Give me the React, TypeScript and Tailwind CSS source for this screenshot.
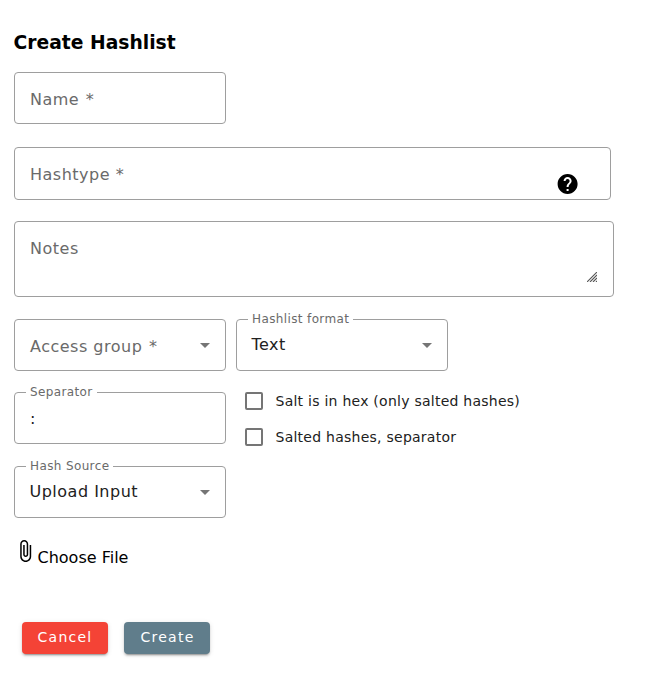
import React from "react";

type FieldProps = {
  size: string;
  label: string;
  required?: boolean;
  floating?: boolean;
  value?: string;
  valueClass?: string;
  select?: boolean;
  children?: React.ReactNode;
};

function Field({ size, label, required, floating, value, valueClass = "mt-[13px] -ml-[0.5px]", select, children }: FieldProps) {
  return (
    <div className={`relative flex rounded-[4px] border border-[#9e9e9e] pl-[15px] pr-[15px] ${size}`}>
      {floating ? (
        <>
          <span className="absolute left-[11px] top-[-9px] whitespace-nowrap bg-white px-1 text-[12px] leading-4 tracking-[0.375px] text-[#6a6a6a]">
            {label}
          </span>
          <span className={`text-[16px] leading-6 tracking-[0.5px] text-[#212121] ${valueClass}`}>{value}</span>
        </>
      ) : (
        <span className="mt-[15px] text-[16px] leading-6 tracking-[0.5px] text-[#6a6a6a]">
          {label}
          {required && <span className="ml-[1px]"> *</span>}
        </span>
      )}
      {select && (
        <svg className="ml-auto mt-[23px] h-[5px] w-[10px]" viewBox="0 0 10 5" fill="#757575">
          <path d="M0 0h10L5 5z" />
        </svg>
      )}
      {children}
    </div>
  );
}

function Checkbox({ label }: { label: string }) {
  return (
    <label className="flex h-9 items-center">
      <span className="h-[18px] w-[18px] rounded-[2px] border-2 border-[#757575]" />
      <span className="ml-[12.5px] text-[14px] leading-5 tracking-[0.25px] text-[#212121]">{label}</span>
    </label>
  );
}

const buttonBase =
  "h-8 w-[86px] rounded-[4px] text-[14px] leading-[30px] pb-[2px] tracking-[1.25px] text-white shadow-[0_3px_1px_-2px_rgba(0,0,0,0.2),0_2px_2px_0_rgba(0,0,0,0.14),0_1px_5px_0_rgba(0,0,0,0.12)]";

export default function App() {
  return (
    <main className="h-[678px] w-[668px] bg-white pl-[14px] pt-[31px] font-['DejaVu_Sans',sans-serif] text-black">
      <h3 className="-ml-[0.4px] h-[41px] text-[18.72px] font-bold leading-6">Create Hashlist</h3>

      <Field size="h-[52px] w-[212px]" label="Name" required />

      <Field size="mt-[23px] h-[53px] w-[597px]" label="Hashtype *">
        <svg className="ml-auto mr-[15px] mt-6 h-6 w-6" viewBox="0.4 0 24 24">
          <path d="M12 2C6.48 2 2 6.48 2 12s4.48 10 10 10 10-4.48 10-10S17.52 2 12 2zm1 17h-2v-2h2v2zm2.07-7.75l-.9.92C13.45 12.9 13 13.5 13 15h-2v-.5c0-1.1.45-2.1 1.17-2.83l1.24-1.26c.37-.36.59-.86.59-1.41 0-1.1-.9-2-2-2s-2 .9-2 2H8c0-2.21 1.79-4 4-4s4 1.79 4 4c0 .88-.36 1.68-.93 2.25z" />
        </svg>
      </Field>

      <Field size="mt-[21px] h-[76px] w-[600px]" label="Notes">
        <svg className="ml-auto mr-px mt-[50px] h-[10px] w-[10px]" viewBox="0 0 10 10" stroke="#555" strokeWidth="1.1">
          <path d="M0 10L10 0M3 10l7-7M6 10l4-4M9 10l1-1" />
        </svg>
      </Field>

      <div className="mt-[22px] flex gap-[10px]">
        <Field size="h-[52px] w-[212px]" label="Access group" required select />
        <Field size="h-[52px] w-[212px]" label="Hashlist format" value="Text" floating select />
      </div>

      <div className="mt-[12px] flex gap-[19px]">
        <Field size="mt-[9px] h-[52px] w-[212px]" label="Separator" value=":" valueClass="mt-[14px]" floating />
        <div className="flex flex-col">
          <Checkbox label="Salt is in hex (only salted hashes)" />
          <Checkbox label="Salted hashes, separator" />
        </div>
      </div>

      <Field size="mt-[11px] h-[52px] w-[212px]" label="Hash Source" value="Upload Input" floating select />

      <div className="-ml-[0.5px] mt-[21px] flex h-[39px]">
        <svg className="h-6 w-6" viewBox="0.8 0 24 24">
          <path d="M16.5 6v11.5c0 2.21-1.79 4-4 4s-4-1.79-4-4V5c0-1.38 1.12-2.5 2.5-2.5s2.5 1.12 2.5 2.5v10.500c0 .55-.45 1-1 1s-1-.45-1-1V6H10v9.500c0 1.380 1.120 2.500 2.500 2.500s2.500-1.120 2.500-2.500V5c0-2.210-1.790-4-4-4S7 2.790 7 5v12.500c0 3.040 2.460 5.500 5.500 5.500s5.500-2.460 5.500-5.500V6h-1.500z" />
        </svg>
        <span className="mt-[7px] text-[16px] leading-6">Choose File</span>
      </div>

      <div className="ml-2 mt-[44px] flex gap-4">
        <button className={`${buttonBase} bg-[#f44336]`}>Cancel</button>
        <button className={`${buttonBase} bg-[#607d8b] pl-px`}>Create</button>
      </div>
    </main>
  );
}
